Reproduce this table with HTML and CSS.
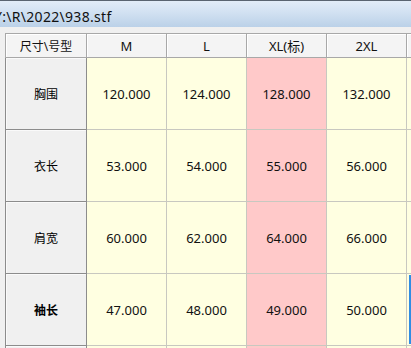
FILE: index.html
```
<!DOCTYPE html>
<html>
<head>
<meta charset="utf-8">
<link rel="stylesheet" href="styles.css">
</head>
<body>
<div class="title"><span class="title-text">Y:\R\2022\938.stf</span></div>
<div class="area">
<table class="grid">
<colgroup><col class="c-head"><col class="c"><col class="c"><col class="c"><col class="c"><col class="c"></colgroup>
<tr class="hrow">
<th class="corner">尺寸\号型</th><th>M</th><th>L</th><th>XL(标)</th><th>2XL</th><th></th>
</tr>
<tr class="row">
<th class="rh">胸围</th><td>120.000</td><td>124.000</td><td class="std">128.000</td><td>132.000</td><td></td>
</tr>
<tr class="row">
<th class="rh">衣长</th><td>53.000</td><td>54.000</td><td class="std">55.000</td><td>56.000</td><td></td>
</tr>
<tr class="row">
<th class="rh">肩宽</th><td>60.000</td><td>62.000</td><td class="std">64.000</td><td>66.000</td><td></td>
</tr>
<tr class="row">
<th class="rh cur">袖长</th><td>47.000</td><td>48.000</td><td class="std">49.000</td><td>50.000</td><td class="sel"><div class="selbar"></div></td>
</tr>
<tr class="row">
<th class="rh"></th><td></td><td></td><td class="std"></td><td></td><td></td>
</tr>
</table>
</div>
</body>
</html>
```

FILE: styles.css
```
html, body {
  margin: 0;
  padding: 0;
  background: #f0f0f0;
  overflow: hidden;
  width: 411px;
  height: 348px;
}
body {
  font-family: "Noto Sans", "Noto Sans CJK SC", sans-serif;
  color: #000;
}
.title {
  height: 27px;
  box-sizing: border-box;
  border-top: 1px solid #5a6470;
  padding-top: 5px;
  background: linear-gradient(to bottom, #e2ecf7 0%, #d3e2f2 40%, #bbd1e8 100%);
  display: flex;
  align-items: center;
  overflow: hidden;
  white-space: nowrap;
}
.title-text {
  font-family: "Noto Sans", sans-serif;
  font-size: 14px;
  letter-spacing: 0.3px;
  margin-left: -6px;
  color: #111;
}
.area {
  padding-top: 6px;
  padding-left: 5px;
}
.grid {
  border-collapse: collapse;
  table-layout: fixed;
  width: 481px;
}
.c-head { width: 81px; }
.c { width: 80px; }
.grid th, .grid td {
  padding: 0;
  text-align: center;
  vertical-align: middle;
  font-weight: normal;
  font-size: 13px;
  overflow: hidden;
  white-space: nowrap;
}
.hrow { height: 24px; }
.hrow th {
  background: #f4f4f4;
  border: 1px solid #a8a8a8;
  box-shadow: inset 1px 1px 0 #ffffff;
  color: #111;
}
.hrow th.corner {
  font-size: 12px;
}
.row { height: 72px; }
.row td {
  background: #ffffe1;
  border: 1px solid #c8c8c0;
  font-family: "Noto Sans", sans-serif;
  font-size: 13px;
  color: #111;
}
.row td.std {
  background: #ffc9c9;
}
.row th.rh {
  background: #f0f0f0;
  border: 1px solid #8c8c8c;
  box-shadow: inset 1px 1px 0 #fafafa;
  font-size: 12px;
}
.row th.cur {
  font-weight: bold;
}
.row td.sel {
  position: relative;
}
.selbar {
  position: absolute;
  left: 2px;
  top: 1px;
  bottom: 1px;
  right: 0;
  background: #2f8de4;
}
```
